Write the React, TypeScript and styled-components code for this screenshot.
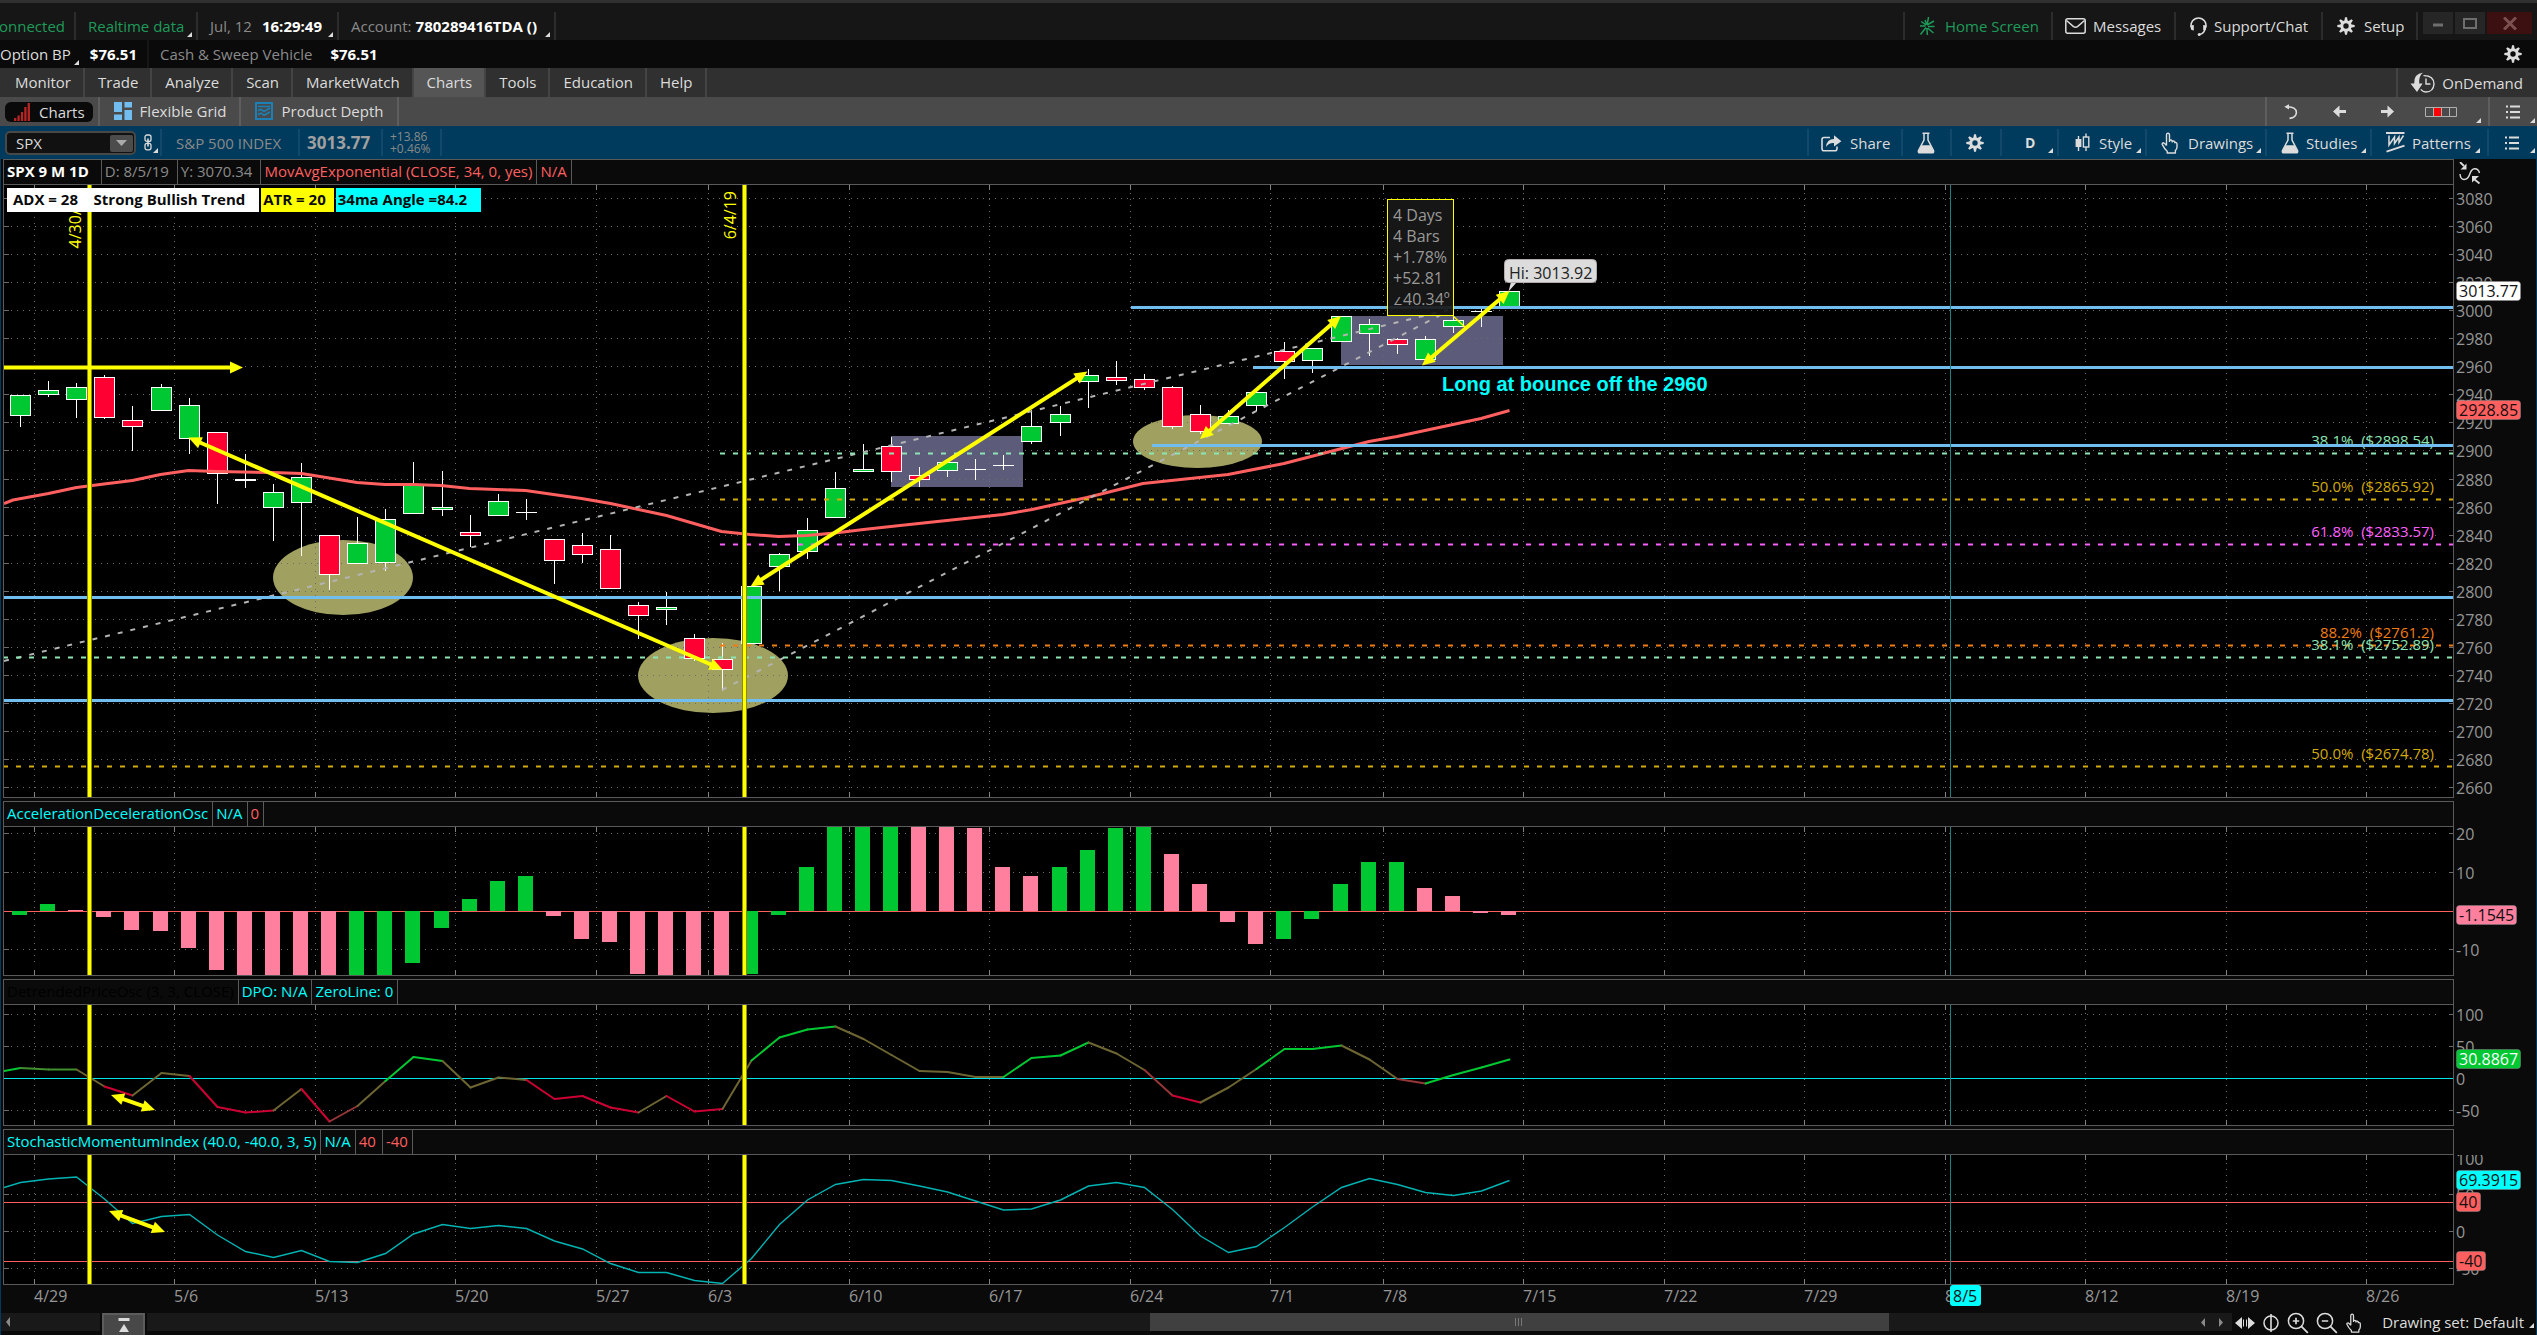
import React from "react";
import styled, { createGlobalStyle } from "styled-components";

/* ---------- palette ---------- */
const c = {
  text: "#dcdcdc",
  dim: "#8a8a8a",
  axis: "#969696",
  line: "#5a5a5a",
  grid: "#6c6c6c",
  yellow: "#ffff00",
  cyan: "#00ffff",
  green: "#00c832",
  red: "#ff0033",
  pink: "#ff7f9f",
  coral: "#ff5f5f",
  sky: "#72bdf0",
  blue: "#003a5c",
  blueLine: "#12496b",
};
const FONT = '"Open Sans", "Noto Sans", sans-serif';

const Global = createGlobalStyle`
  html, body { margin: 0; padding: 0; background: #0a0a0a; }
  * { box-sizing: border-box; }
  body { font: 15px/20px ${FONT}; color: ${c.text}; overflow: hidden; }
  button { font: inherit; color: inherit; background: none; border: 0; margin: 0; padding: 0; cursor: pointer; white-space: nowrap; }
  svg { display: block; flex: none; }
`;

const Page = styled.div`
  display: flex;
  flex-direction: column;
  min-height: 100vh;
`;

/* ---------- bars ---------- */
const Bar = styled.div<{ $h: number; $bg: string }>`
  display: flex;
  align-items: stretch;
  height: ${(p) => p.$h}px;
  background: ${(p) => p.$bg};
  white-space: nowrap;
`;
const StatusBar = styled(Bar)`
  border-top: 3px solid #303030;
  padding-top: 9px;
`;
const ToolBar = styled(Bar)`
  padding: 3px 0;
`;
const Spring = styled.div`
  flex: 1;
`;
type CellProps = { $gap?: number; $sep?: string; $left?: number; $right?: number; $w?: number };
const Cell = styled.div<CellProps>`
  position: relative;
  display: flex;
  align-items: center;
  gap: ${(p) => p.$gap ?? 10}px;
  min-width: ${(p) => p.$w ?? 0}px;
  padding: 0 ${(p) => p.$right ?? 12}px 0 ${(p) => p.$left ?? 14}px;
  border-right: 2px solid ${(p) => p.$sep ?? "#2c2c2c"};
`;
const CellButton = styled.button<CellProps>`
  position: relative;
  display: flex;
  align-items: center;
  gap: ${(p) => p.$gap ?? 10}px;
  min-width: ${(p) => p.$w ?? 0}px;
  padding: 0 ${(p) => p.$right ?? 8}px 0 ${(p) => p.$left ?? 14}px;
  border-right: 2px solid ${(p) => p.$sep ?? "#2c2c2c"};
`;
const RightGroup = styled.div<{ $sep: string }>`
  display: flex;
  border-left: 2px solid ${(p) => p.$sep};
`;
const Corner = styled.span<{ $end?: number }>`
  position: absolute;
  right: ${(p) => p.$end ?? 4}px;
  bottom: 3px;
  border-left: 5px solid transparent;
  border-bottom: 5px solid ${c.text};
`;
const Txt = styled.span<{ $c?: string; $b?: boolean; $s?: number }>`
  color: ${(p) => p.$c ?? c.text};
  font-weight: ${(p) => (p.$b ? 700 : 400)};
  font-size: ${(p) => p.$s ?? 15}px;
`;
const Clipped = styled.div`
  display: flex;
  justify-content: flex-end;
  width: 65px;
  overflow: hidden;
`;
const WinButton = styled.button<{ $close?: boolean }>`
  display: flex;
  align-items: center;
  justify-content: center;
  width: ${(p) => (p.$close ? 45 : 30)}px;
  height: 22px;
  background: ${(p) => (p.$close ? "#3c1010" : "#262626")};
`;
const WinGroup = styled.div`
  display: flex;
  gap: 2px;
  padding: 0 5px 0 5px;
`;

const TabBar = styled(Bar)`
  padding-left: 2px;
`;
const Tab = styled.button<{ $on?: boolean }>`
  padding: 0 12px 2px 13px;
  border-right: 2px solid #444444;
  background: ${(p) => (p.$on ? "#555555" : "#303030")};
`;
const SubTab = styled.button`
  display: flex;
  align-items: center;
  gap: 8px;
  padding: 0 13px 2px 14px;
  border-right: 2px solid #5e5e5e;
`;
const SubTabOn = styled(SubTab)`
  padding: 0 5px;
`;
const Pill = styled.span`
  display: flex;
  align-items: center;
  gap: 9px;
  height: 20px;
  padding: 0 8px 0 9px;
  border-radius: 6px;
  background: #0a0a0a;
`;
const NavButton = styled.button`
  display: flex;
  align-items: center;
  justify-content: center;
  width: 48px;
`;

const SymbolBox = styled.div`
  display: flex;
  align-items: center;
  width: 131px;
  height: 24px;
  margin: 2px 8px 0 5px;
  padding-right: 1px;
  border: 2px solid #484848;
  border-radius: 5px;
  background: #111111;
`;
const SymbolInput = styled.input`
  flex: 1;
  min-width: 0;
  padding: 0 0 0 9px;
  border: 0;
  outline: 0;
  background: transparent;
  color: ${c.text};
  font: 15px/20px ${FONT};
`;
const DropButton = styled.button`
  display: flex;
  align-items: center;
  justify-content: center;
  width: 23px;
  height: 17px;
  border-radius: 2px;
  background: #4c4c4c;
`;
const Change = styled.div`
  font-size: 12px;
  line-height: 12px;
  color: ${c.dim};
`;

/* ---------- icons ---------- */
const Gear = ({ size = 18 }: { size?: number }) => (
  <svg width={size} height={size} viewBox="0 0 18 18">
    <circle cx="9" cy="9" r="4.2" fill="none" stroke={c.text} strokeWidth="3" />
    {[0, 45, 90, 135, 180, 225, 270, 315].map((a) => (
      <path key={a} d="M7.2 4.6 L8 0.3 H10 L10.8 4.6Z" fill={c.text} transform={`rotate(${a} 9 9)`} />
    ))}
  </svg>
);
const Flask = () => (
  <svg width="18" height="22" viewBox="0 0 18 22">
    <path d="M5.5 1.2H12.5M7 1.5V8L1.5 18.5Q0.8 20.8 3 20.8H15Q17.2 20.8 16.5 18.5L11 8V1.5" fill="none" stroke={c.text} strokeWidth="1.5" />
    <path d="M4.6 13.2H13.4L16.5 19Q16.8 21 15 21H3Q1.2 21 1.5 19Z" fill={c.text} />
  </svg>
);
const Hand = ({ h = 22 }: { h?: number }) => (
  <svg width="17" height={h} viewBox="0 0 17 22">
    <path
      d="M5.5 13.5V3.2Q5.5 1.2 7 1.2Q8.5 1.2 8.5 3.2V9M8.5 10V8.6Q10 7.4 11.2 8.8V10.5M11.2 10V9.4Q12.7 8.3 13.8 9.8V11.2M13.8 10.6Q16 10 16 12.2V15Q16 17 14.4 18.6V21H6.2V19.2Q3.4 17 1.2 12.4Q1 10.8 2.6 10.8Q3.8 11.2 5.5 13.5"
      fill="none"
      stroke={c.text}
      strokeWidth="1.4"
      strokeLinejoin="round"
    />
  </svg>
);
const ListIcon = () => (
  <svg width="14" height="14" viewBox="0 0 14 14">
    <path d="M0 1.5H2M4 1.5H14M0 7H2M4 7H14M0 12.5H2M4 12.5H14" stroke={c.text} strokeWidth="2" />
  </svg>
);
const HomeIcon = () => (
  <svg width="16" height="20" viewBox="0 0 16 20">
    <path d="M8 9L9.6 1M8 9L15 5M9 10.5H15.5M8.6 12L14.5 17M7.8 12L8.4 19M7 11.5L1.5 18.5M6.6 10H1M7 9L2.2 5.5M7.6 8.4L6 4" stroke="#1e9b5a" strokeWidth="1.5" fill="none" />
  </svg>
);
const MailIcon = () => (
  <svg width="21" height="16" viewBox="0 0 21 16">
    <rect x="0.8" y="0.8" width="19.4" height="14.4" rx="2" fill="none" stroke={c.text} strokeWidth="1.5" />
    <path d="M1.5 2.5L8.5 8.6Q10.5 9.8 12.5 8.6L19.5 2.5" fill="none" stroke={c.text} strokeWidth="1.5" />
  </svg>
);
const HeadsetIcon = () => (
  <svg width="19" height="19" viewBox="0 0 19 19">
    <path d="M3 12.5Q0.8 7.5 3.6 3.8Q6 0.9 9.5 0.9Q13 0.9 15.4 3.8Q18.2 7.5 16 12.5Q14.6 16.6 10.5 17.6" fill="none" stroke={c.text} strokeWidth="1.5" />
    <path d="M1.2 8.5L4.8 8V13.4L2.6 13ZM17.8 8.5L14.2 8V13.4L16.4 13Z" fill={c.text} />
    <circle cx="10.2" cy="17.4" r="1.5" fill={c.text} />
  </svg>
);
const OnDemandIcon = () => (
  <svg width="25" height="21" viewBox="0 0 25 21">
    <path d="M13 0.8Q3.8 1.6 4.2 11.5H0.5L7 20L12.6 11.5H9.2Q8.6 4 13 0.8Z" fill={c.text} />
    <path d="M13.5 3.6Q23.8 3.4 24 12Q23.4 20 15.8 20Q12.6 19.8 10.8 17.4M16 6.5V12H20.4" fill="none" stroke={c.text} strokeWidth="1.4" />
  </svg>
);
const BarsIcon = () => (
  <svg width="16" height="18" viewBox="0 0 16 18">
    <path d="M1.2 18V15M4.6 18V12.5M8 18V9M11.4 18V4M14.8 18V0" stroke="#b92525" strokeWidth="2.3" />
  </svg>
);
const GridIcon = () => (
  <svg width="18" height="18" viewBox="0 0 18 18">
    <path d="M0 0H8V10H0ZM0 12.5H8V18H0ZM10.5 0H18V5.5H10.5ZM10.5 8H18V18H10.5Z" fill={c.sky} />
  </svg>
);
const DepthIcon = () => (
  <svg width="18" height="18" viewBox="0 0 18 18">
    <rect x="1" y="1" width="16" height="16" fill="none" stroke="#1c80b8" strokeWidth="2" />
    <path d="M3 4.5H15M3 8.5L6 7.5L9 9.5L15 6M3 12.5L6 11.2L9 13.2L15 10" fill="none" stroke="#1c80b8" strokeWidth="1.6" />
  </svg>
);
const ShareIcon = () => (
  <svg width="21" height="18" viewBox="0 0 21 18">
    <path d="M9 3.5H3Q1 3.5 1 5.5V14.5Q1 16.8 3 16.8H14Q16 16.8 16 14.5V12.5" fill="none" stroke={c.text} strokeWidth="1.6" />
    <path d="M5 13Q5.6 5.2 13 5V1.2L20.4 7.2L13 12.6V9Q7.8 8.6 5 13Z" fill={c.text} />
  </svg>
);
const StyleIcon = () => (
  <svg width="15" height="20" viewBox="0 0 15 20">
    <path d="M3.5 3V18M11 0.5V4M11 14V18" stroke={c.text} strokeWidth="1.4" />
    <rect x="0.6" y="6" width="5.8" height="8" fill={c.text} />
    <rect x="8.4" y="4" width="5.4" height="10" fill="none" stroke={c.text} strokeWidth="1.4" />
  </svg>
);
const PatternIcon = () => (
  <svg width="19" height="21" viewBox="0 0 19 21">
    <path d="M0 1H18.5M0.5 19.6L18.5 13.6" stroke={c.text} strokeWidth="2" />
    <path d="M3 3.5V13L8.5 5V11.5L13 5V10.5L17.5 3.5" fill="none" stroke={c.text} strokeWidth="1.5" />
  </svg>
);
const LinkIcon = () => (
  <svg width="8" height="17" viewBox="0 0 8 17">
    <rect x="1" y="1" width="6" height="6.4" rx="2" fill="none" stroke={c.text} strokeWidth="1.3" />
    <rect x="1" y="9.4" width="6" height="6.4" rx="2" fill="none" stroke={c.text} strokeWidth="1.3" />
    <path d="M4 4.5V12.5" stroke={c.text} strokeWidth="1.6" />
  </svg>
);
const Arrow = ({ flip }: { flip?: boolean }) => (
  <svg width="13" height="13" viewBox="0 0 13 13">
    <path d="M0 6.5L6.5 0.5V5H13V8H6.5V12.5Z" fill={c.text} transform={flip ? "rotate(180 6.5 6.5)" : undefined} />
  </svg>
);
const UndoIcon = () => (
  <svg width="14" height="16" viewBox="0 0 14 16">
    <path d="M3.5 2.8Q12.6 3 12.4 8.5Q12.2 13.6 5.5 14.4" fill="none" stroke={c.text} strokeWidth="1.6" />
    <path d="M0.3 2.8L5 0.2V5.6Z" fill={c.text} />
  </svg>
);
const PagesIcon = () => (
  <svg width="32" height="10" viewBox="0 0 32 10">
    <path d="M0.5 0.5H31.5V9.5H0.5ZM8.5 0.5V9.5M16.5 0.5V9.5M24.5 0.5V9.5" fill="none" stroke="#b0b0b0" />
    <rect x="9" y="1" width="7" height="8" fill="#ff0000" />
  </svg>
);
const CollapseIcon = () => (
  <svg width="22" height="22" viewBox="0 0 22 22">
    <path d="M1 12Q1.5 17.5 5 17.5Q9 17.5 11 11.5Q12.5 7 15.5 6.8Q19.5 6.6 20.5 11" fill="none" stroke={c.text} strokeWidth="1.4" />
    <path d="M1 0L5 4M15 17L20.5 21.5" stroke={c.text} strokeWidth="1.8" />
    <path d="M7.5 1.5V7.5H1.5ZM13 14H20L13 20.5Z" fill={c.text} />
  </svg>
);
const ZoomIcon = ({ plus }: { plus?: boolean }) => (
  <svg width="22" height="22" viewBox="0 0 22 22">
    <circle cx="9" cy="9" r="7.6" fill="none" stroke={c.text} strokeWidth="1.5" />
    <path d={`M14.4 14.4L20.8 20.8M5.8 9H12.2${plus ? "M9 5.8V12.2" : ""}`} stroke={c.text} strokeWidth="1.7" />
  </svg>
);

/* ---------- chart data ---------- */
const barX = (n: number) => Math.floor(20.6 + n * 28.094) + 0.5;

type Candle = ["g" | "r" | "d", number, number, number, number];
const candles: Candle[] = [
  ["g", 395, 416, 395, 427], ["g", 390, 395, 381, 397], ["g", 387, 400, 383, 418], ["r", 377, 418, 375, 419],
  ["r", 420, 427, 406, 451], ["g", 387, 411, 384, 411], ["g", 405, 439, 398, 454], ["r", 432, 474, 432, 504],
  ["d", 479, 481, 454, 488], ["g", 492, 508, 484, 541], ["g", 477, 503, 463, 556], ["r", 535, 575, 535, 590],
  ["g", 543, 564, 517, 564], ["g", 519, 563, 509, 571], ["g", 485, 514, 462, 514], ["g", 507, 510, 471, 516],
  ["r", 532, 536, 515, 547], ["g", 501, 516, 494, 516], ["d", 512, 513, 499, 520], ["r", 539, 561, 539, 584],
  ["r", 545, 555, 533, 563], ["r", 549, 589, 535, 589], ["r", 605, 616, 602, 639], ["g", 607, 610, 592, 625],
  ["r", 638, 659, 634, 661], ["r", 659, 670, 643, 691], ["g", 586, 644, 586, 644], ["g", 554, 567, 553, 591],
  ["g", 530, 552, 518, 559], ["g", 488, 518, 472, 518], ["g", 469, 472, 444, 472], ["r", 446, 472, 437, 482],
  ["r", 475, 480, 467, 487], ["g", 462, 471, 462, 477], ["d", 469, 470, 459, 480], ["d", 465, 466, 455, 470],
  ["g", 426, 442, 410, 444], ["g", 414, 423, 406, 436], ["g", 375, 382, 369, 408], ["r", 377, 381, 361, 385],
  ["r", 379, 388, 374, 390], ["r", 387, 427, 386, 429], ["r", 414, 432, 405, 434], ["g", 416, 424, 410, 424],
  ["g", 392, 406, 392, 411], ["r", 351, 362, 342, 379], ["g", 348, 361, 348, 373], ["g", 316, 342, 316, 342],
  ["g", 324, 334, 319, 356], ["r", 339, 345, 338, 354], ["g", 339, 360, 336, 360], ["g", 320, 327, 315, 333],
  ["d", 311, 312, 306, 327], ["g", 291, 307, 291, 307],
];

const weeks: [number, string][] = [
  [34, "4/29"], [174, "5/6"], [315, "5/13"], [455, "5/20"], [596, "5/27"], [708, "6/3"], [849, "6/10"], [989, "6/17"], [1130, "6/24"],
  [1270, "7/1"], [1383, "7/8"], [1523, "7/15"], [1664, "7/22"], [1804, "7/29"], [1945, "8/5"], [2085, "8/12"], [2226, "8/19"], [2366, "8/26"],
];

const ema =
  "4,503.5 13,500 48.5,493.5 76.5,487.5 104,484 132.5,480.5 160.5,474.5 188.5,470.5 216.5,471.5 272.5,472.5 301.5,473.5 357,482.5 385,484.5 413.5,484.5 441,485.5 469.5,488.5 525.5,490.5 581.5,498.5 610.5,503.5 666.5,515.5 721.5,531.5 750,534.5 778.5,536.5 806.5,535.5 835,533 863.5,529.5 900,525.5 1003,514.5 1032,509.5 1087,497.5 1143,483.5 1228,474.5 1284,463.5 1369,441.5 1397,436.5 1481,418.5 1509.5,410.5";

/* tip of each histogram bar; "g" rising, "p" falling */
const histogram =
  "g915 g904 p910 p917 p930 p931 p948 p970 p975 p975 p975 p975 g975 g975 g963 g928 g899 g881 g876 p916 p939 p942 p974 p975 p975 p975 g974 g915 g867 g827 g827 g827 p827 p827 p828 p867 p876 g867 g850 g828 g827 p854 p884 p922 p944 g939 g919 g884 g862 g862 p888 p896 p913 p915".split(" ");

const dpo = [
  1068, 1069.5, 1069.5, 1086.5, 1095.5, 1073, 1076, 1107, 1112.5, 1110.5, 1089, 1121.5, 1106, 1081, 1057, 1061, 1087.5, 1077.5, 1080,
  1099, 1096, 1107.5, 1112.5, 1096, 1111.5, 1109, 1060.5, 1037.5, 1029.5, 1026.5, 1039, 1055, 1071, 1072, 1077, 1077, 1058, 1055.5,
  1042.5, 1053.5, 1070, 1095.5, 1102.5, 1087.5, 1069, 1049, 1049, 1045.5, 1059.5, 1079, 1083.5, 1075, 1067.5, 1059.5,
];
const dpoTones = "G D D O R O O R R R O R B O G G O O O R R R R O R R O G G G O O O O O O G G G O O B R O O G G G O O B G G G".split(" ");
const tone: Record<string, string> = { G: c.green, D: "#3f8f2f", O: "#6e6632", R: "#cc0033", B: "#963636" };

const smi = [
  1182.5, 1179, 1177, 1199, 1223.5, 1216.5, 1214.5, 1235, 1251.5, 1257.5, 1250.5, 1261.5, 1262.5, 1253.5, 1234, 1224.5, 1228.5, 1225.5,
  1228.5, 1241, 1249, 1263.5, 1272.5, 1272.5, 1280.5, 1283.5, 1258.5, 1224.5, 1200, 1184.5, 1179.5, 1180.5, 1186, 1192, 1201, 1210,
  1209, 1200, 1186, 1182.5, 1187.5, 1209.5, 1236, 1252.5, 1246.5, 1227.5, 1207, 1187.5, 1178.5, 1184.5, 1192.5, 1195.5, 1191, 1180.5,
];

const fibs: { y: number; from: number; color: string; label: string }[] = [
  { y: 453, from: 720, color: "#8ce6b4", label: "38.1%  ($2898.54)" },
  { y: 499, from: 720, color: "#d2aa0a", label: "50.0%  ($2865.92)" },
  { y: 544, from: 720, color: "#ff5fff", label: "61.8%  ($2833.57)" },
  { y: 645, from: 720, color: "#f07d14", label: "88.2%  ($2761.2)" },
  { y: 657, from: 3, color: "#8ce6b4", label: "38.1%  ($2752.89)" },
  { y: 766, from: 3, color: "#d2aa0a", label: "50.0%  ($2674.78)" },
];
const levels: [number, number][] = [[307, 1131], [367, 1253], [445, 1152], [597, 4], [700, 4]];
const prices = Array.from({ length: 22 }, (_, i) => ({ label: String(3080 - i * 20), y: Math.floor(198.5 + i * 28.05) }));

/* ---------- chart parts ---------- */
const ChartArea = styled.main`
  flex: 1;
  display: flex;
  flex-direction: column;
  gap: 3px;
  padding-left: 2px;
  border: solid ${c.blue};
  border-width: 0 1px;
  background: #0a0a0a;
`;
const PanelRow = styled.section`
  display: flex;
`;
const PanelBox = styled.div`
  flex: 1;
  min-width: 0;
  border: 1px solid ${c.line};
`;
const PanelHead = styled.header`
  display: flex;
  height: 25px;
  border-bottom: 1px solid ${c.line};
`;
const HeadCell = styled.div<{ $c?: string; $b?: boolean; $right?: number }>`
  display: flex;
  align-items: center;
  padding: 0 ${(p) => p.$right ?? 4}px 2px 3px;
  border-right: 1px solid ${c.line};
  color: ${(p) => p.$c ?? c.cyan};
  font-weight: ${(p) => (p.$b ? 700 : 400)};
  white-space: nowrap;
`;
const PlotWrap = styled.div`
  position: relative;
  background: #000000;
`;
const AxisCol = styled.div`
  width: 82px;
`;
const AxisHead = styled.div`
  height: 26px;
  padding: 3px 0 0 5px;
`;
const Badges = styled.div`
  position: absolute;
  left: 3px;
  top: 3px;
  display: flex;
  gap: 2px;
`;
const Badge = styled.span<{ $bg: string; $left?: number; $right: number }>`
  height: 24px;
  padding: 0 ${(p) => p.$right}px 0 ${(p) => p.$left ?? 2}px;
  background: ${(p) => p.$bg};
  color: #0a0a0a;
  font-weight: 700;
  line-height: 23px;
  white-space: pre;
`;
const ChartSvg = styled.svg<{ $open?: boolean }>`
  width: 100%;
  overflow: ${(p) => (p.$open ? "visible" : "hidden")};
  font: 16px ${FONT};
`;

const ArrowLine = ({ p, single }: { p: [number, number, number, number]; single?: boolean }) => {
  const [x1, y1, x2, y2] = p;
  const len = Math.hypot(x2 - x1, y2 - y1);
  const deg = (Math.atan2(y2 - y1, x2 - x1) * 180) / Math.PI;
  return (
    <g transform={`translate(${x1} ${y1}) rotate(${deg})`} fill={c.yellow}>
      <rect x={single ? 0 : 10} y="-2" width={len - (single ? 10 : 20)} height="4" />
      {!single && <path d="M0 0L13 -6V6Z" />}
      <path d={`M${len} 0L${len - 13} -6V6Z`} />
    </g>
  );
};

const Marker = ({ x, top, bottom }: { x: number; top: number; bottom: number }) => (
  <g shapeRendering="crispEdges">
    <rect x={x - 2} y={top} width="5" height={bottom - top} fill="#8c8c00" />
    <rect x={x - 1} y={top} width="3" height={bottom - top} fill={c.yellow} />
  </g>
);

const Grid = ({ top, bottom, rows }: { top: number; bottom: number; rows: number[] }) => (
  <g shapeRendering="crispEdges" stroke={c.grid} fill="none">
    {rows.map((y) => (
      <React.Fragment key={y}>
        <line x1="11" x2="99.6%" y1={y + 0.5} y2={y + 0.5} strokeDasharray="1 5" />
        <line x1="4" x2="9" y1={y + 0.5} y2={y + 0.5} />
        <svg x="100%" y="0" overflow="visible">
          <line x1="0" x2="4" y1={y + 0.5} y2={y + 0.5} />
        </svg>
      </React.Fragment>
    ))}
    {weeks.map(([x]) => (
      <React.Fragment key={x}>
        <line x1={x + 0.5} x2={x + 0.5} y1={top + 8} y2={bottom - 8} strokeDasharray="1 5" />
        <path d={`M${x + 0.5} ${top}v5M${x + 0.5} ${bottom}v-5`} stroke="#828282" />
      </React.Fragment>
    ))}
  </g>
);

const Tag = ({ y, w, bg, fg = "#111111", children }: { y: number; w: number; bg: string; fg?: string; children: string }) => (
  <g>
    <rect x="2.5" y={y + 0.5} width={w - 1} height="19" rx="3" fill={bg} stroke="#888888" strokeOpacity="0.5" />
    <text x="5" y={y + 16} fill={fg}>{children}</text>
  </g>
);

type PanelProps = {
  top: number;
  bottom: number;
  rows: number[];
  labels: { label: string; y: number }[];
  head: React.ReactNode;
  tags: React.ReactNode;
  corner?: React.ReactNode;
  overlay?: React.ReactNode;
  under?: React.ReactNode;
  clipAxis?: boolean;
  title: string;
  children: React.ReactNode;
};
const Panel = ({ top, bottom, rows, labels, head, tags, corner, overlay, under, clipAxis, title, children }: PanelProps) => (
  <PanelRow>
    <PanelBox>
      <PanelHead>{head}</PanelHead>
      <PlotWrap>
        <ChartSvg height={bottom - top} role="img" aria-label={title}>
          <g transform={`translate(-4 ${-top})`}>
            {under}
            <Grid top={top} bottom={bottom} rows={rows} />
            {children}
            <rect x="1950" y={top} width="1" height={bottom - top} fill="#1c8080" />
          </g>
        </ChartSvg>
        {overlay}
      </PlotWrap>
    </PanelBox>
    <AxisCol>
      <AxisHead>{corner}</AxisHead>
      <ChartSvg height={bottom - top} $open={!clipAxis}>
        <g transform={`translate(0 ${-top})`}>
          {labels.map((l) => (
            <text key={l.label} x="2" y={l.y + 7} fill={c.axis}>{l.label}</text>
          ))}
          {tags}
        </g>
      </ChartSvg>
    </AxisCol>
  </PanelRow>
);

const PricePlot = () => (
  <>
    {candles.map(([k, t, b, hi, lo], i) => {
      const x = barX(i);
      return (
        <g key={i} shapeRendering="crispEdges">
          <line x1={x} x2={x} y1={hi} y2={lo} stroke="#ffffff" />
          <rect x={x - 10.5} y={t} width="21" height={b - t} fill="#ffffff" />
          {k !== "d" && <rect x={x - 9.5} y={t + 1} width="19" height={b - t - 2} fill={k === "g" ? c.green : c.red} />}
        </g>
      );
    })}
    <polyline points={ema} fill="none" stroke={c.coral} strokeWidth="3" strokeLinejoin="round" />
    <g stroke="#b4b4b4" strokeWidth="2" strokeDasharray="5 8">
      <line x1="4" y1="661" x2="1448" y2="310" />
      <line x1="722" y1="690" x2="1448" y2="311" />
    </g>
    {fibs.map((f) => (
      <g key={f.label}>
        <line x1={f.from} x2="4000" y1={f.y + 0.5} y2={f.y + 0.5} stroke={f.color} strokeWidth="2" strokeDasharray="5 8" />
        <svg x="100%" y="0" overflow="visible">
          <text x="-15" y={f.y - 7} textAnchor="end" fill={f.color} fontSize="15" style={{ whiteSpace: "pre" }}>{f.label}</text>
        </svg>
      </g>
    ))}
    {levels.map(([y, x]) => (
      <rect key={y} x={x} y={y - 1} width="4000" height="3" fill={c.sky} />
    ))}
    <Marker x={89} top={185} bottom={797} />
    <Marker x={744} top={185} bottom={797} />
    <g fill={c.yellow} textAnchor="end">
      <text transform="translate(81 191) rotate(-90)">4/30/19</text>
      <text transform="translate(736 191) rotate(-90)">6/4/19</text>
    </g>
    <ArrowLine p={[0, 367.5, 243, 367.5]} single />
    <ArrowLine p={[188.5, 437.5, 722.5, 669.5]} />
    <ArrowLine p={[750.5, 586.5, 1087.5, 371.5]} />
    <ArrowLine p={[1200, 439, 1341, 316]} />
    <ArrowLine p={[1422, 365.5, 1509.5, 291]} />
    <path d="M1453 316L1465 327" stroke={c.yellow} strokeWidth="1.4" />
    <g fill="#999999">
      <rect x="1387.5" y="199.5" width="66" height="116" fill="#181818" fillOpacity="0.93" stroke={c.yellow} />
      <text x="1393" y="221">4 Days</text>
      <text x="1393" y="242">4 Bars</text>
      <text x="1393" y="263">+1.78%</text>
      <text x="1393" y="284">+52.81</text>
      <text x="1393" y="305"><tspan fontSize="11">∠</tspan>40.34º</text>
    </g>
    <path d="M1511 282L1508.5 291.5L1517 282Z" fill="#dcdcdc" />
    <rect x="1504.5" y="259.5" width="92" height="23" rx="4" fill="#dcdcdc" stroke="#b4aaaa" />
    <text x="1509" y="279" fill="#222222">Hi: 3013.92</text>
    <text x="1442" y="391" fill={c.cyan} fontFamily='"Liberation Sans", Arial, sans-serif' fontWeight="700" fontSize="20">
      Long at bounce off the 2960
    </text>
  </>
);

const TimeAxis = styled.div`
  height: 25px;
  padding-left: 1px;
`;

/* ---------- footer ---------- */
const Footer = styled.footer`
  display: flex;
  height: 22px;
  align-items: flex-start;
  padding-right: 12px;
  border: solid ${c.blue};
  border-width: 0 1px;
  background: #0a0a0a;
  line-height: 18px;
  white-space: nowrap;
`;
const SmallTrack = styled.div`
  display: flex;
  align-items: center;
  width: 99px;
  height: 18px;
  background: #191919;
`;
const Track = styled.div`
  display: flex;
  flex: 1;
  align-items: center;
  height: 18px;
  padding-right: 1px;
  background: #191919;
`;
const UpButton = styled.button`
  display: flex;
  align-items: center;
  justify-content: center;
  width: 43px;
  height: 22px;
  margin: 0 2px;
  border: 2px solid #5c5c5c;
  border-bottom: 0;
  background: #484848;
`;
const Thumb = styled.div`
  display: flex;
  align-items: center;
  justify-content: center;
  width: 35.5%;
  height: 18px;
  margin: 0 auto 0 48.1%;
  background: #404040;
`;
const StepButton = styled.button`
  display: flex;
  justify-content: center;
  width: 19px;
`;
const FootIcons = styled.div`
  display: flex;
  align-items: center;
  gap: 7px;
  height: 19px;
  padding: 0 20px 0 3px;
`;
const FootButton = styled.button`
  position: relative;
`;

export default function App() {
  return (
    <Page>
      <Global />
      <StatusBar $h={40} $bg="#161616">
        <Cell $left={0} $right={9}>
          <Clipped><Txt $c="#1e9b5a">Connected</Txt></Clipped>
        </Cell>
        <CellButton $left={12} $w={122}><Txt $c="#1e9b5a">Realtime data</Txt><Corner /></CellButton>
        <CellButton $left={12} $w={141}><Txt $c={c.dim}>Jul, 12</Txt><Txt $c="#ffffff" $b>16:29:49</Txt><Corner /></CellButton>
        <CellButton $left={12} $gap={4} $w={217}><Txt $c={c.dim}>Account:</Txt><Txt $c="#ffffff" $b>780289416TDA ()</Txt><Corner /></CellButton>
        <Spring />
        <RightGroup $sep="#2c2c2c">
          <CellButton $w={148}><HomeIcon /><Txt $c="#1e9b5a">Home Screen</Txt></CellButton>
          <CellButton $left={12} $gap={7} $w={123}><MailIcon />Messages</CellButton>
          <CellButton $left={13} $gap={6} $w={147}><HeadsetIcon />Support/Chat</CellButton>
          <CellButton $gap={9} $w={95}><Gear />Setup</CellButton>
        </RightGroup>
        <WinGroup>
          <WinButton aria-label="Minimize"><svg width="10" height="10"><path d="M0 7H10" stroke="#6e6e6e" strokeWidth="3" /></svg></WinButton>
          <WinButton aria-label="Maximize"><svg width="14" height="12"><path d="M1 1V11H13V1M0 2H14" fill="none" stroke="#6e6e6e" strokeWidth="2" /></svg></WinButton>
          <WinButton $close aria-label="Close"><svg width="14" height="13"><path d="M1 0.5L13 12.5M13 0.5L1 12.5" stroke="#7d5050" strokeWidth="3" /></svg></WinButton>
        </WinGroup>
      </StatusBar>

      <Bar $h={28} $bg="#0a0a0a">
        <Cell $left={0} $gap={19} $right={9} $sep="#161616" $w={149}>
          <Txt>Option BP</Txt>
          <Txt $c="#ffffff" $b>$76.51</Txt>
          <Corner $end={68} />
        </Cell>
        <Cell $left={11} $gap={18} $sep="transparent">
          <Txt $c={c.dim}>Cash &amp; Sweep Vehicle</Txt>
          <Txt $c="#ffffff" $b>$76.51</Txt>
        </Cell>
        <Spring />
        <CellButton $sep="transparent" $right={13} aria-label="Account settings"><Gear /></CellButton>
      </Bar>

      <TabBar as="nav" $h={29} $bg="#303030">
        {["Monitor", "Trade", "Analyze", "Scan", "MarketWatch", "Charts", "Tools", "Education", "Help"].map((t) => (
          <Tab key={t} $on={t === "Charts"}>{t}</Tab>
        ))}
        <Spring />
        <RightGroup $sep="#444444">
          <CellButton $sep="transparent" $left={12} $gap={7} $right={12}><OnDemandIcon />OnDemand</CellButton>
        </RightGroup>
      </TabBar>

      <Bar $h={29} $bg="#4a4a4a">
        <SubTabOn><Pill><BarsIcon />Charts</Pill></SubTabOn>
        <SubTab><GridIcon />Flexible Grid</SubTab>
        <SubTab><DepthIcon />Product Depth</SubTab>
        <Spring />
        <RightGroup $sep="#5e5e5e">
          <NavButton aria-label="Undo"><UndoIcon /></NavButton>
          <NavButton aria-label="Back"><Arrow /></NavButton>
          <NavButton aria-label="Forward"><Arrow flip /></NavButton>
          <CellButton $sep="#5e5e5e" $left={14} $right={31} aria-label="Pages"><PagesIcon /><Corner $end={7} /></CellButton>
          <CellButton $sep="transparent" $left={16} $right={15} aria-label="Menu"><ListIcon /><Corner $end={0} /></CellButton>
        </RightGroup>
      </Bar>

      <ToolBar $h={33} $bg={c.blue}>
        <SymbolBox>
          <SymbolInput aria-label="Symbol" defaultValue="SPX" />
          <DropButton aria-label="Choose symbol"><svg width="11" height="6"><path d="M0 0H11L5.5 6Z" fill="#aaaaaa" /></svg></DropButton>
        </SymbolBox>
        <CellButton $sep={c.blueLine} $left={0} $right={8} aria-label="Link"><LinkIcon /><Corner $end={2} /></CellButton>
        <Cell $sep={c.blueLine} $w={138}><Txt $c={c.dim}>S&amp;P 500 INDEX</Txt></Cell>
        <Cell $sep={c.blueLine} $left={7} $right={8} $w={83}><Txt $c="#a0a0a0" $b $s={17}>3013.77</Txt></Cell>
        <Cell $sep={c.blueLine} $left={7} $right={8} $w={59}><Change>+13.86<br />+0.46%</Change></Cell>
        <Spring />
        <RightGroup $sep={c.blueLine}>
          <CellButton $sep={c.blueLine} $left={12} $gap={8} $w={94}><ShareIcon />Share</CellButton>
          <CellButton $sep={c.blueLine} $w={49} aria-label="Lab"><Flask /></CellButton>
          <CellButton $sep={c.blueLine} $w={50} aria-label="Chart settings"><Gear /></CellButton>
          <CellButton $sep={c.blueLine} $left={23} $w={57}><Txt $b $s={14}>D</Txt><Corner /></CellButton>
          <CellButton $sep={c.blueLine} $left={16} $gap={9} $w={88}><StyleIcon />Style<Corner /></CellButton>
          <CellButton $sep={c.blueLine} $w={120}><Hand />Drawings<Corner /></CellButton>
          <CellButton $sep={c.blueLine} $gap={7} $w={105}><Flask />Studies<Corner /></CellButton>
          <CellButton $sep={c.blueLine} $gap={7} $w={117}><PatternIcon />Patterns<Corner $end={7} /></CellButton>
          <CellButton $sep="transparent" $left={16} $right={16} aria-label="More"><ListIcon /><Corner $end={0} /></CellButton>
        </RightGroup>
      </ToolBar>

      <ChartArea>
        <Panel
          title="SPX daily price"
          top={185}
          bottom={797}
          rows={prices.map((p) => p.y)}
          labels={prices}
          corner={<CollapseIcon />}
          head={
            <>
              <HeadCell $c="#ffffff" $b $right={12}>SPX 9 M 1D</HeadCell>
              <HeadCell $c={c.dim} $right={8}>D: 8/5/19</HeadCell>
              <HeadCell $c={c.dim} $right={8}>Y: 3070.34</HeadCell>
              <HeadCell $c={c.coral}>MovAvgExponential (CLOSE, 34, 0, yes)</HeadCell>
              <HeadCell $c={c.coral}>N/A</HeadCell>
            </>
          }
          tags={
            <>
              <Tag y={281} w={65} bg="#ffffff">3013.77</Tag>
              <Tag y={400} w={65} bg={c.coral}>2928.85</Tag>
            </>
          }
          under={
            <>
              <g fill="#a0a060">
                <ellipse cx="343" cy="577.5" rx="70" ry="37.5" />
                <ellipse cx="713" cy="675.5" rx="75" ry="37.5" />
                <ellipse cx="1197.5" cy="441.5" rx="64.5" ry="26.5" />
              </g>
              <rect x="891" y="436" width="132" height="51" fill="#5d5b7a" />
              <rect x="1341" y="316" width="162" height="49" fill="#5d5b7a" />
            </>
          }
          overlay={
            <Badges>
              <Badge $bg="#ffffff" $left={6} $right={14}>{"ADX = 28    Strong Bullish Trend"}</Badge>
              <Badge $bg={c.yellow} $right={8}>ATR = 20</Badge>
              <Badge $bg={c.cyan} $right={14}>34ma Angle =84.2</Badge>
            </Badges>
          }
        >
          <PricePlot />
        </Panel>

        <Panel
          title="Acceleration deceleration oscillator"
          top={827}
          bottom={975}
          rows={[833, 872, 949]}
          labels={[{ label: "20", y: 833 }, { label: "10", y: 872 }, { label: "-10", y: 949 }]}
          head={
            <>
              <HeadCell>AccelerationDecelerationOsc</HeadCell>
              <HeadCell>N/A</HeadCell>
              <HeadCell $c={c.coral}>0</HeadCell>
            </>
          }
          tags={<Tag y={905} w={61} bg={c.pink}>-1.1545</Tag>}
        >
          <rect x="4" y="911" width="4000" height="1" fill={c.coral} />
          <g shapeRendering="crispEdges">
            {histogram.map((h, i) => {
              const y = Number(h.slice(1));
              const down = y > 911;
              return (
                <rect key={i} x={barX(i) - 8.5} y={down ? 911 : y} width="15" height={Math.abs(y - 911)} fill={h[0] === "g" ? c.green : c.pink} />
              );
            })}
          </g>
          <Marker x={89} top={827} bottom={975} />
          <Marker x={744} top={827} bottom={975} />
        </Panel>

        <Panel
          title="Detrended price oscillator"
          top={1005}
          bottom={1125}
          rows={[1014, 1046, 1110]}
          labels={[{ label: "100", y: 1014 }, { label: "50", y: 1046 }, { label: "0", y: 1078 }, { label: "-50", y: 1110 }]}
          head={
            <>
              <HeadCell $c="#000000">DetrendedPriceOsc (3, 3, CLOSE)</HeadCell>
              <HeadCell>DPO: N/A</HeadCell>
              <HeadCell>ZeroLine: 0</HeadCell>
            </>
          }
          tags={<Tag y={1049} w={65} bg={c.green} fg="#ffffff">30.8867</Tag>}
        >
          <rect x="4" y="1078" width="4000" height="1" fill="#00e6e6" />
          <g strokeWidth="2" strokeLinecap="round">
            {dpo.map((y, i) => (
              <line key={i} x1={i ? barX(i - 1) : 4} y1={i ? dpo[i - 1] : 1071} x2={barX(i)} y2={y} stroke={tone[dpoTones[i]]} />
            ))}
          </g>
          <Marker x={89} top={1005} bottom={1125} />
          <Marker x={744} top={1005} bottom={1125} />
          <ArrowLine p={[111, 1095, 155, 1110]} />
        </Panel>

        <Panel
          title="Stochastic momentum index"
          top={1155}
          bottom={1284}
          clipAxis
          rows={[1194, 1231, 1268]}
          labels={[{ label: "100", y: 1158 }, { label: "50", y: 1194 }, { label: "0", y: 1231 }, { label: "-50", y: 1268 }]}
          head={
            <>
              <HeadCell>StochasticMomentumIndex (40.0, -40.0, 3, 5)</HeadCell>
              <HeadCell>N/A</HeadCell>
              <HeadCell $c={c.coral} $right={6}>40</HeadCell>
              <HeadCell $c={c.coral}>-40</HeadCell>
            </>
          }
          tags={
            <>
              <Tag y={1170} w={65} bg={c.cyan}>69.3915</Tag>
              <Tag y={1192} w={25} bg={c.coral}>40</Tag>
              <Tag y={1251} w={30} bg={c.coral}>-40</Tag>
            </>
          }
        >
          <rect x="4" y="1202" width="4000" height="1" fill={c.coral} />
          <rect x="4" y="1261" width="4000" height="1" fill={c.coral} />
          <polyline points={`4,1187.5 ${smi.map((y, i) => `${barX(i)},${y}`).join(" ")}`} fill="none" stroke="#00b4b4" strokeWidth="1.4" />
          <Marker x={89} top={1155} bottom={1284} />
          <Marker x={744} top={1155} bottom={1284} />
          <ArrowLine p={[109, 1211, 165, 1232]} />
        </Panel>

        <TimeAxis>
          <ChartSvg height="25" $open>
            <g transform="translate(-4 -1288)" fill={c.axis}>
              {weeks.map(([x, label]) => (
                <text key={x} x={x} y="1302">{label}</text>
              ))}
              <rect x="1950" y="1285" width="31" height="21" rx="3" fill={c.cyan} />
              <text x="1953" y="1302" fill="#111111">8/5</text>
            </g>
          </ChartSvg>
        </TimeAxis>
      </ChartArea>

      <Footer>
        <SmallTrack><svg width="14" height="10"><path d="M9 0V10L5 5Z" fill="#8a8a8a" /></svg></SmallTrack>
        <UpButton aria-label="Show gadget"><svg width="12" height="14"><path d="M0.5 1.5H11.5" stroke={c.text} strokeWidth="3" /><path d="M6 6L11 14H1Z" fill={c.text} /></svg></UpButton>
        <Track>
          <Thumb><svg width="8" height="8"><path d="M0.5 0V8M3.5 0V8M6.5 0V8" stroke="#777777" /></svg></Thumb>
          <StepButton aria-label="Scroll left"><svg width="5" height="9"><path d="M5 0V9L1 4.5Z" fill="#8a8a8a" /></svg></StepButton>
          <StepButton aria-label="Scroll right"><svg width="5" height="9"><path d="M0 0V9L4 4.5Z" fill="#8a8a8a" /></svg></StepButton>
        </Track>
        <FootIcons>
          <button aria-label="Expand"><svg width="20" height="12"><path d="M0 6L7 0V12ZM20 6L13 0V12Z" fill={c.text} /><path d="M8.5 2.5V9.5M11.5 2.5V9.5" stroke={c.text} /></svg></button>
          <button aria-label="Fit"><svg width="18" height="18"><circle cx="9" cy="9" r="7" fill="none" stroke={c.text} strokeWidth="1.5" /><path d="M9 0V18" stroke={c.text} strokeWidth="1.6" /></svg></button>
          <button aria-label="Zoom in"><ZoomIcon plus /></button>
          <button aria-label="Zoom out"><ZoomIcon /></button>
          <button aria-label="Pan"><Hand h={20} /></button>
        </FootIcons>
        <FootButton>Drawing set: Default<Corner $end={-10} /></FootButton>
      </Footer>
    </Page>
  );
}
